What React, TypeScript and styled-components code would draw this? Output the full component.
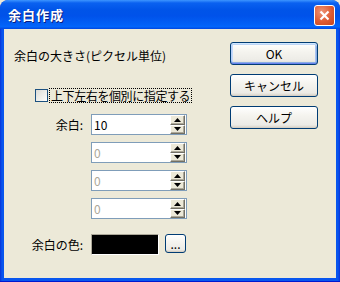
import React from "react";
import styled, { createGlobalStyle } from "styled-components";

const GlobalStyle = createGlobalStyle`
  html, body {
    margin: 0;
    padding: 0;
    background: #ece9d8;
  }
  body {
    font-family: "Noto Sans CJK JP", "Noto Sans", sans-serif;
    font-size: 12px;
    color: #000;
  }
`;

const Window = styled.div`
  width: 340px;
  height: 282px;
  box-sizing: border-box;
  display: flex;
  flex-direction: column;
  padding: 0 4px 4px;
  border-radius: 8px 8px 0 0;
  background: linear-gradient(90deg, #0831d9 0, #0855ee 2px, #0859ee 50%, #0855ee calc(100% - 2px), #0831d9 100%);
  box-shadow: inset 0 -1px #0019cf;
  overflow: hidden;
`;

const TitleBar = styled.div`
  height: 29px;
  margin: 0 -4px;
  padding: 0 5px 0 8px;
  display: flex;
  align-items: center;
  justify-content: space-between;
  border-radius: 8px 8px 0 0;
  background: linear-gradient(
    180deg,
    #3d95ff 0,
    #0a61f0 3px,
    #0054e8 10px,
    #0052ea 55%,
    #0261f7 85%,
    #0366fb 92%,
    #0046e0 100%
  );
`;

const Title = styled.div`
  color: #fff;
  font-weight: 700;
  font-size: 13px;
  letter-spacing: 1px;
  line-height: 14px;
  text-shadow: 1px 1px #0a1e80;
  margin-top: 1px;
`;

const CloseButton = styled.div`
  width: 21px;
  height: 21px;
  box-sizing: border-box;
  border: 1px solid #fff;
  border-radius: 3px;
  background: radial-gradient(circle at 35% 30%, #ee9476 0, #de5b33 55%, #c4451d 100%);
  display: flex;
  align-items: center;
  justify-content: center;
  margin-top: 2px;
`;

const Client = styled.div`
  flex: 1;
  background: #ece9d8;
  display: flex;
  padding: 13px 18px 0 10px;
`;

const LeftColumn = styled.div`
  flex: 1;
  padding-top: 7px;
`;

const Heading = styled.div`
  line-height: 14px;
  height: 14px;
`;

const CheckRow = styled.div`
  margin: 25px 0 0 21px;
  display: flex;
  align-items: center;
  gap: 1px;
  height: 15px;
`;

const CheckBox = styled.div`
  width: 13px;
  height: 13px;
  box-sizing: border-box;
  border: 1px solid #1c5180;
  background: linear-gradient(135deg, #dcdcd7 0, #f4f4f0 70%, #fff 100%);
`;

const CheckLabel = styled.div`
  border: 1px dotted #000;
  padding: 0 1px;
  line-height: 13px;
  letter-spacing: -0.4px;
`;

const FieldGrid = styled.div<{ $top: number }>`
  margin-top: ${(p) => p.$top}px;
  display: grid;
  grid-template-columns: 69px auto;
  column-gap: 8px;
  row-gap: 7px;
  align-items: center;
`;

const FieldLabel = styled.div`
  text-align: right;
  line-height: 14px;
`;

const SpinField = styled.div`
  width: 96px;
  height: 21px;
  box-sizing: border-box;
  border: 1px solid #7f9db9;
  background: #fff;
  display: flex;
  align-items: stretch;
`;

const SpinValue = styled.div<{ $disabled?: boolean }>`
  flex: 1;
  padding-left: 2px;
  line-height: 19px;
  color: ${(p) => (p.$disabled ? "#aca899" : "#000")};
`;

const Spinner = styled.div`
  width: 15px;
  margin: 0 1px 0 0;
  display: flex;
  flex-direction: column;
`;

const SpinButton = styled.div`
  flex: 1;
  box-sizing: border-box;
  background: #ece9d8;
  border-style: solid;
  border-width: 1px;
  border-color: #fff #716f64 #716f64 #fff;
  box-shadow: inset -1px -1px #aca899;
  display: flex;
  align-items: center;
  justify-content: center;
`;

const ColorValue = styled.div`
  display: flex;
  align-items: flex-start;
  gap: 6px;
`;

const ColorSwatch = styled.div`
  width: 68px;
  height: 21px;
  box-sizing: border-box;
  border: 1px solid;
  border-color: #aca899 #fff #fff #aca899;
  background: #000;
`;

const RightColumn = styled.div`
  width: 88px;
  display: flex;
  flex-direction: column;
  gap: 9px;
`;

const XpButton = styled.div<{ $default?: boolean; $w?: number; $h?: number }>`
  width: ${(p) => p.$w ?? 88}px;
  height: ${(p) => p.$h ?? 23}px;
  box-sizing: border-box;
  border: 1px solid #003c74;
  border-radius: 3px;
  background: linear-gradient(180deg, #fff 0, #f5f4ef 40%, #ecebe6 85%, #d6d0c5 100%);
  box-shadow: ${(p) =>
    p.$default
      ? "inset 0 1px #cee7ff, inset 0 2px #bcd4f6, inset 0 -1px #6982ee, inset 0 -2px #89ade4, inset 1px 0 #b8d0f9, inset 2px 0 #c5dafa, inset -1px 0 #89ade4, inset -2px 0 #a9c3f0"
      : "inset 0 -1px #d6d0c5"};
  display: flex;
  align-items: center;
  justify-content: center;
  line-height: 14px;
  font-size: 12px;
`;

const Arrow = ({ up }: { up?: boolean }) => (
  <svg width="7" height="4" viewBox="0 0 7 4">
    <polygon points={up ? "3.5,0 7,4 0,4" : "0,0 7,0 3.5,4"} fill="#000" />
  </svg>
);

const Spin = ({ value, disabled }: { value: string; disabled?: boolean }) => (
  <SpinField>
    <SpinValue $disabled={disabled}>{value}</SpinValue>
    <Spinner>
      <SpinButton>
        <Arrow up />
      </SpinButton>
      <SpinButton>
        <Arrow />
      </SpinButton>
    </Spinner>
  </SpinField>
);

export default function App() {
  return (
    <>
      <GlobalStyle />
      <Window>
        <TitleBar>
          <Title>余白作成</Title>
          <CloseButton>
            <svg width="11" height="11" viewBox="0 0 11 11">
              <path d="M1.5 1.5 L9.5 9.5 M9.5 1.5 L1.5 9.5" stroke="#fff" strokeWidth="2.2" />
            </svg>
          </CloseButton>
        </TitleBar>
        <Client>
          <LeftColumn>
            <Heading>余白の大きさ(ピクセル単位)</Heading>
            <CheckRow>
              <CheckBox />
              <CheckLabel>上下左右を個別に指定する</CheckLabel>
            </CheckRow>
            <FieldGrid $top={11}>
              <FieldLabel>余白:</FieldLabel>
              <Spin value="10" />
              <div />
              <Spin value="0" disabled />
              <div />
              <Spin value="0" disabled />
              <div />
              <Spin value="0" disabled />
            </FieldGrid>
            <FieldGrid $top={15}>
              <FieldLabel>余白の色:</FieldLabel>
              <ColorValue>
                <ColorSwatch />
                <XpButton $w={21} $h={19}>...</XpButton>
              </ColorValue>
            </FieldGrid>
          </LeftColumn>
          <RightColumn>
            <XpButton $default>OK</XpButton>
            <XpButton>キャンセル</XpButton>
            <XpButton>ヘルプ</XpButton>
          </RightColumn>
        </Client>
      </Window>
    </>
  );
}
